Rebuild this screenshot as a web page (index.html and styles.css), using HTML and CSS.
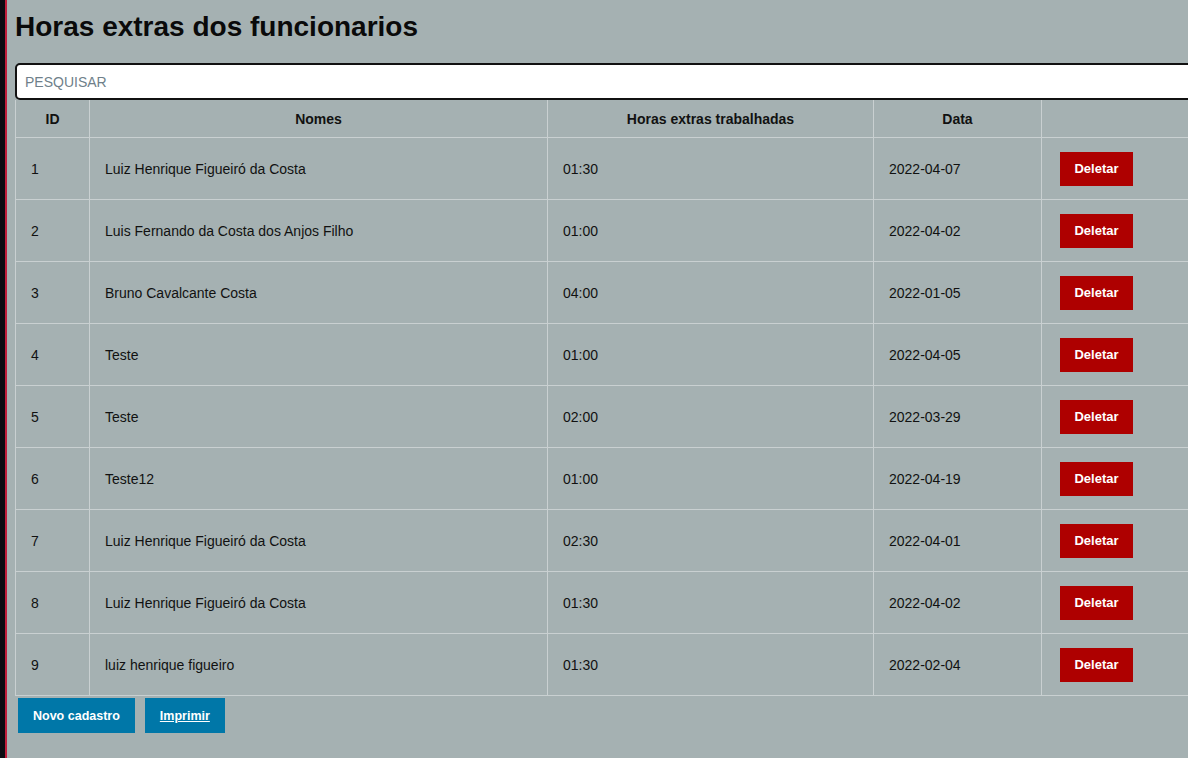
FILE: index.html
```html
<!DOCTYPE html>
<html lang="pt-BR">
<head>
<meta charset="utf-8">
<title>Horas extras dos funcionarios</title>
<link rel="stylesheet" href="styles.css">
</head>
<body>
<div class="edge"></div>
<main class="page">
  <h1 class="title">Horas extras dos funcionarios</h1>
  <input class="search" type="text" placeholder="PESQUISAR">
  <table class="grid">
    <colgroup>
      <col class="c-id"><col class="c-name"><col class="c-hours"><col class="c-date"><col class="c-act">
    </colgroup>
    <thead>
      <tr><th>ID</th><th>Nomes</th><th>Horas extras trabalhadas</th><th>Data</th><th></th></tr>
    </thead>
    <tbody>
      <tr><td>1</td><td>Luiz Henrique Figueiró da Costa</td><td>01:30</td><td>2022-04-07</td><td class="act"><button class="btn-del">Deletar</button></td></tr>
      <tr><td>2</td><td>Luis Fernando da Costa dos Anjos Filho</td><td>01:00</td><td>2022-04-02</td><td class="act"><button class="btn-del">Deletar</button></td></tr>
      <tr><td>3</td><td>Bruno Cavalcante Costa</td><td>04:00</td><td>2022-01-05</td><td class="act"><button class="btn-del">Deletar</button></td></tr>
      <tr><td>4</td><td>Teste</td><td>01:00</td><td>2022-04-05</td><td class="act"><button class="btn-del">Deletar</button></td></tr>
      <tr><td>5</td><td>Teste</td><td>02:00</td><td>2022-03-29</td><td class="act"><button class="btn-del">Deletar</button></td></tr>
      <tr><td>6</td><td>Teste12</td><td>01:00</td><td>2022-04-19</td><td class="act"><button class="btn-del">Deletar</button></td></tr>
      <tr><td>7</td><td>Luiz Henrique Figueiró da Costa</td><td>02:30</td><td>2022-04-01</td><td class="act"><button class="btn-del">Deletar</button></td></tr>
      <tr><td>8</td><td>Luiz Henrique Figueiró da Costa</td><td>01:30</td><td>2022-04-02</td><td class="act"><button class="btn-del">Deletar</button></td></tr>
      <tr><td>9</td><td>luiz henrique figueiro</td><td>01:30</td><td>2022-02-04</td><td class="act"><button class="btn-del">Deletar</button></td></tr>
    </tbody>
  </table>
  <div class="actions">
    <button class="btn-blue">Novo cadastro</button>
    <a class="btn-blue link" href="#">Imprimir</a>
  </div>
</main>
</body>
</html>
```
FILE: styles.css
```css
html, body {
  margin: 0;
  height: 100%;
  overflow: hidden;
}
body {
  display: flex;
  background: #a5b1b2;
  font-family: "Liberation Sans", Arial, sans-serif;
  color: #111;
}
.edge {
  flex: 0 0 5px;
  background: #0c0b11;
  border-right: 2px solid #c21d3b;
}
.page {
  flex: 1;
  min-width: 0;
  padding: 11px 0 0 8px;
  overflow: hidden;
}
.title {
  margin: 0;
  font-size: 28px;
  line-height: 32px;
  font-weight: bold;
  color: #0a0a0a;
}
.search {
  display: block;
  box-sizing: border-box;
  margin-top: 20px;
  width: 1200px;
  height: 37px;
  border: 2px solid #111;
  border-radius: 5px;
  background: #fff;
  padding: 0 8px;
  font-family: "Liberation Sans", Arial, sans-serif;
  font-size: 14px;
  color: #111;
  outline: none;
}
.search::placeholder {
  color: #6f7f8a;
}
.grid {
  border-collapse: collapse;
  table-layout: fixed;
  width: 1186px;
  font-size: 14px;
}
.c-id { width: 74px; }
.c-name { width: 458px; }
.c-hours { width: 326px; }
.c-date { width: 168px; }
.c-act { width: 160px; }
.grid th, .grid td {
  border: 1px solid #c9d0d1;
  padding: 0 15px;
}
.grid thead tr:first-child th {
  border-top: 0;
}
.grid th {
  height: 37px;
  font-weight: bold;
  text-align: center;
}
.grid td {
  height: 61px;
  text-align: left;
}
.grid td.act {
  padding-left: 18px;
}
.btn-del {
  width: 73px;
  height: 34px;
  border: 0;
  background: #ae0000;
  color: #fff;
  font-family: "Liberation Sans", Arial, sans-serif;
  font-size: 13px;
  font-weight: bold;
  padding: 0;
}
.actions {
  display: flex;
  gap: 10px;
  margin: 2px 0 0 3px;
}
.btn-blue {
  display: flex;
  align-items: center;
  justify-content: center;
  box-sizing: border-box;
  height: 35px;
  padding: 0 15px;
  border: 0;
  background: #0077a8;
  color: #fff;
  font-family: "Liberation Sans", Arial, sans-serif;
  font-size: 12.5px;
  font-weight: bold;
}
.link {
  text-decoration: underline;
}
```
